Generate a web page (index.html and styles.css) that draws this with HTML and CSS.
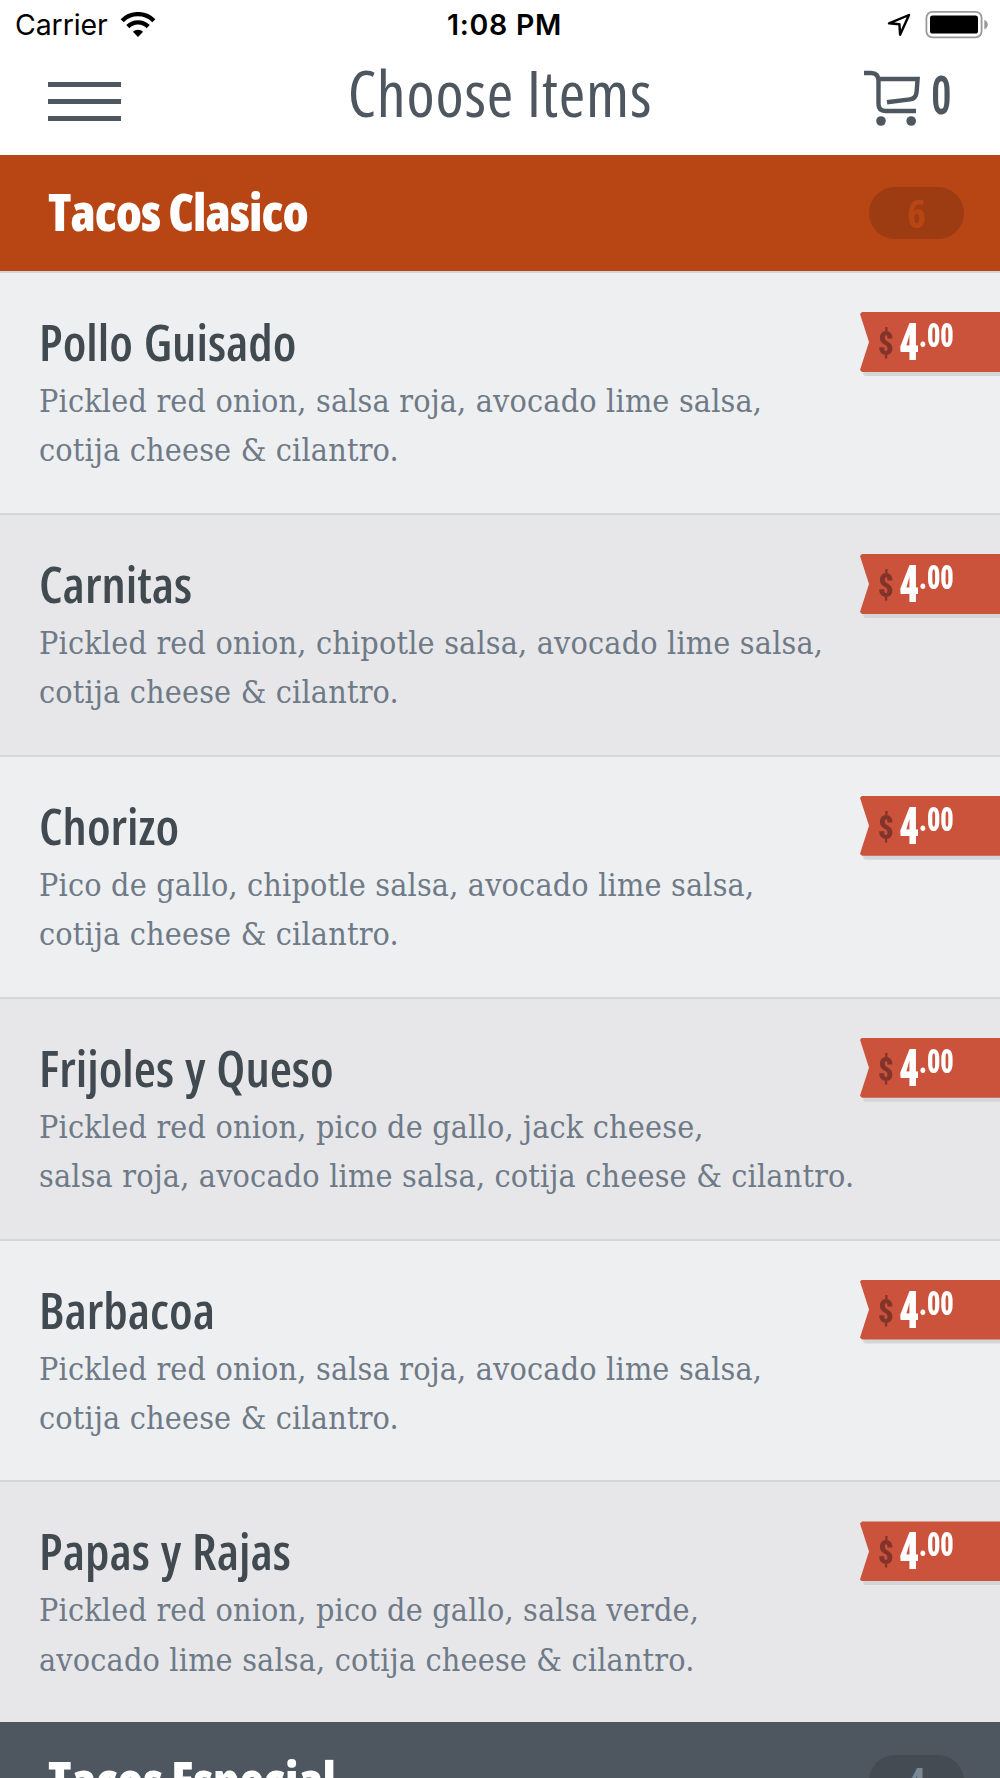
FILE: index.html
```html
<!DOCTYPE html>
<html lang="en">
<head>
  <meta charset="UTF-8">
  <title>Choose Items</title>
  <link rel="stylesheet" href="styles.css">
</head>
<body>
  <div class="status-bar">
    <div class="status-left">
      <span>Carrier</span>
      <svg class="wifi" width="36" height="26" viewBox="0 0 36 26">
        <path d="M2.2 8.7A22.3 22.3 0 0 1 33.8 8.7" fill="none" stroke="#000" stroke-width="4.4"/>
        <path d="M7.8 14.6A14.4 14.4 0 0 1 28.2 14.6" fill="none" stroke="#000" stroke-width="4.4"/>
        <path d="M18 25L12.9 19.8A7.2 7.2 0 0 1 23.1 19.8Z"/>
      </svg>
    </div>
    <span class="status-time">1:08 PM</span>
    <div class="status-right">
      <svg width="26" height="26" viewBox="0 0 26 26">
        <path d="M3 11.3L23 3L14.1 22.7L13.4 12.2Z" fill="none" stroke="#000" stroke-width="2.4" stroke-linejoin="round"/>
      </svg>
      <svg class="battery" width="64" height="28" viewBox="0 0 64 28">
        <rect x="1.4" y="0.9" width="55.2" height="25.4" rx="6" fill="none" stroke="#999" stroke-width="1.8"/>
        <rect x="5" y="4.6" width="48" height="18" rx="2.6"/>
        <path d="M59.3 8.8Q62.8 10.6 62.8 13.6T59.3 18.6Z" fill="#999"/>
      </svg>
    </div>
  </div>

  <header class="nav">
    <button class="menu-btn" aria-label="Menu"><i></i><i></i><i></i></button>
    <h1>Choose Items</h1>
    <button class="cart-btn" aria-label="Cart">
      <svg width="58" height="58" viewBox="0 0 58 58">
        <g fill="none" stroke="#4e5760" stroke-width="4.4">
          <path d="M0 4H7Q14.5 4 14.5 12V35Q14.5 42 21.5 42H52"/>
          <path d="M14.5 10H53.6L52.6 23Q52 29.6 46 30.4L23 33.3"/>
        </g>
        <circle cx="17" cy="52" r="4.8" fill="#4e5760"/>
        <circle cx="47.2" cy="52" r="4.8" fill="#4e5760"/>
      </svg>
      <span class="cart-count">0</span>
    </button>
  </header>

  <section class="section section-open">
    <h2>Tacos Clasico</h2>
    <span class="badge">6</span>
  </section>

  <ul class="items">
    <li class="item">
      <div class="info">
        <h3>Pollo Guisado</h3>
        <p>Pickled red onion, salsa roja, avocado lime salsa,<br>cotija cheese &amp; cilantro.</p>
      </div>
      <div class="price"><div class="flag"><span class="currency">$</span><span class="dollars">4</span><span class="cents">.00</span></div></div>
    </li>
    <li class="item">
      <div class="info">
        <h3>Carnitas</h3>
        <p>Pickled red onion, chipotle salsa, avocado lime salsa,<br>cotija cheese &amp; cilantro.</p>
      </div>
      <div class="price"><div class="flag"><span class="currency">$</span><span class="dollars">4</span><span class="cents">.00</span></div></div>
    </li>
    <li class="item">
      <div class="info">
        <h3>Chorizo</h3>
        <p>Pico de gallo, chipotle salsa, avocado lime salsa,<br>cotija cheese &amp; cilantro.</p>
      </div>
      <div class="price"><div class="flag"><span class="currency">$</span><span class="dollars">4</span><span class="cents">.00</span></div></div>
    </li>
    <li class="item">
      <div class="info">
        <h3>Frijoles y Queso</h3>
        <p>Pickled red onion, pico de gallo, jack cheese,<br>salsa roja, avocado lime salsa, cotija cheese &amp; cilantro.</p>
      </div>
      <div class="price"><div class="flag"><span class="currency">$</span><span class="dollars">4</span><span class="cents">.00</span></div></div>
    </li>
    <li class="item">
      <div class="info">
        <h3>Barbacoa</h3>
        <p>Pickled red onion, salsa roja, avocado lime salsa,<br>cotija cheese &amp; cilantro.</p>
      </div>
      <div class="price"><div class="flag"><span class="currency">$</span><span class="dollars">4</span><span class="cents">.00</span></div></div>
    </li>
    <li class="item">
      <div class="info">
        <h3>Papas y Rajas</h3>
        <p>Pickled red onion, pico de gallo, salsa verde,<br>avocado lime salsa, cotija cheese &amp; cilantro.</p>
      </div>
      <div class="price"><div class="flag"><span class="currency">$</span><span class="dollars">4</span><span class="cents">.00</span></div></div>
    </li>
  </ul>

  <section class="section">
    <h2>Tacos Especial</h2>
    <span class="badge">4</span>
  </section>
</body>
</html>
```
FILE: styles.css
```css
* {
  box-sizing: border-box;
  margin: 0;
  padding: 0;
}
body {
  width: 1000px;
  height: 1778px;
  overflow: hidden;
  background-color: #fff;
  font-family: "Open Sans", sans-serif;
  font-stretch: 75%;
}
button {
  background: none;
  border: none;
  font: inherit;
}

/* status bar */
.status-bar {
  display: grid;
  grid-template-columns: 1fr auto 1fr;
  align-items: center;
  height: 50px;
  padding: 0 11px 0 15px;
  font-family: "Inter", sans-serif;
  font-size: 28.5px;
  font-stretch: 100%;
  line-height: 50px;
  color: #000;
}
.status-left,
.status-right {
  display: flex;
  align-items: center;
}
.status-left {
  gap: 12px;
  letter-spacing: -0.1px;
}
.status-right {
  justify-content: flex-end;
  gap: 13px;
}
.status-time {
  font-weight: 600;
  letter-spacing: 0.7px;
  padding-left: 5px;
}

/* title bar */
.nav {
  display: grid;
  grid-template-columns: 1fr auto 1fr;
  height: 104.6px;
  padding: 0 50px 0 48px;
  color: #4e5760;
}
.menu-btn {
  display: flex;
  flex-direction: column;
  gap: 12px;
  width: 73px;
  padding-top: 32px;
}
.menu-btn i {
  height: 5px;
  background-color: #4e5760;
}
.nav h1 {
  font-size: 64px;
  font-weight: 380;
  letter-spacing: 0.8px;
  line-height: 80px;
  padding: 3px 0 0 2px;
}
.cart-btn {
  display: flex;
  justify-content: flex-end;
  gap: 9px;
  padding-top: 19px;
  color: #4e5760;
}
.cart-count {
  font-family: "Roboto", sans-serif;
  font-size: 54px;
  font-weight: 600;
  line-height: 54px;
  transform: scaleX(0.76);
  transform-origin: left;
  width: 19px;
}

/* category bars */
.section {
  display: flex;
  align-items: center;
  justify-content: space-between;
  height: 116.4px;
  padding: 0 36px 0 48px;
  background-color: #4e5660;
}
.section-open {
  background-color: #b84614;
}
.section h2 {
  font-size: 51px;
  font-weight: 800;
  letter-spacing: -0.5px;
  line-height: 60px;
  padding-bottom: 4px;
  color: #fff;
}
.section-open h2 {
  letter-spacing: -1px;
}
.badge {
  width: 95px;
  height: 52px;
  border-radius: 26px;
  background-color: #444b53;
  color: #7b8895;
  font-size: 40px;
  font-weight: 700;
  line-height: 51px;
  text-align: center;
}
.section-open .badge {
  background-color: #9d3b13;
  color: #b84614;
}

/* menu items */
.items {
  list-style: none;
}
.item {
  display: flex;
  justify-content: space-between;
  height: 241.9px;
  padding-left: 39px;
  border-top: 2px solid #d5d6d8;
  background-color: #eeeff1;
}
.item:nth-child(even) {
  background-color: #e7e7e9;
}
.info {
  padding-top: 38px;
  white-space: nowrap;
}
.info h3 {
  font-size: 51px;
  font-weight: 600;
  word-spacing: 1.5px;
  line-height: 60px;
  color: #414a51;
}
.info p {
  margin-top: 6px;
  font-family: "DejaVu Serif Condensed", "DejaVu Serif", serif;
  font-size: 32px;
  letter-spacing: 0.18px;
  line-height: 49.2px;
  color: #6e7a87;
}

/* price ribbon */
.price {
  flex: none;
  width: 140px;
  height: 60px;
  margin-top: 39px;
  filter: drop-shadow(3px 4px 0 #d3d5d7);
}
.flag {
  display: flex;
  height: 60px;
  padding-left: 18px;
  background-color: #cb523b;
  clip-path: polygon(0 2px, 2px 0, 100% 0, 100% 100%, 2px 100%, 0 58px, 9px 50%);
  font-family: "Roboto", sans-serif;
  font-weight: 900;
  color: #fff;
}
.flag span {
  transform: scaleX(0.77);
  transform-origin: left;
}
.currency {
  width: 21px;
  font-size: 34px;
  line-height: 62px;
  color: #83342a;
}
.flag .currency {
  transform: scaleX(0.9);
}
.dollars {
  width: 19.5px;
  font-size: 52px;
  line-height: 62px;
}
.cents {
  font-size: 34px;
  line-height: 47px;
}
```
